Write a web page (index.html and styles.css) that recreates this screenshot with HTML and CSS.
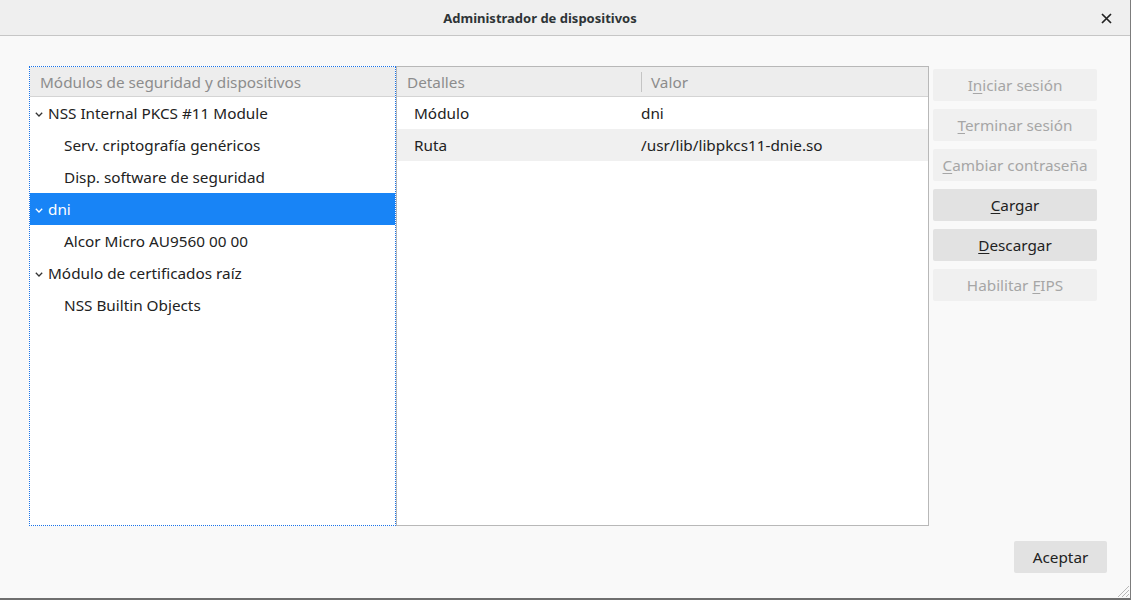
FILE: index.html
```html
<!DOCTYPE html>
<html lang="es">
<head>
<meta charset="utf-8">
<title>Administrador de dispositivos</title>
<link rel="stylesheet" href="styles.css">
</head>
<body>
<div class="window">
  <header class="titlebar">
    <div class="title">Administrador de dispositivos</div>
    <button class="close" aria-label="Cerrar">
      <svg width="11" height="11" viewBox="0 0 11 11"><path d="M1 1L10 10M10 1L1 10" stroke="#222" stroke-width="1.7" fill="none"/></svg>
    </button>
  </header>
  <main class="content">
    <div class="panes">
      <section class="tree">
        <div class="tree-head">Módulos de seguridad y dispositivos</div>
        <div class="row parent"><svg class="chev" width="8" height="5" viewBox="0 0 8 5"><path d="M0.8 0.8L4 4L7.2 0.8" stroke="currentColor" stroke-width="1.3" fill="none"/></svg>NSS Internal PKCS #11 Module</div>
        <div class="row child">Serv. criptografía genéricos</div>
        <div class="row child">Disp. software de seguridad</div>
        <div class="row parent selected"><svg class="chev" width="8" height="5" viewBox="0 0 8 5"><path d="M0.8 0.8L4 4L7.2 0.8" stroke="currentColor" stroke-width="1.3" fill="none"/></svg>dni</div>
        <div class="row child">Alcor Micro AU9560 00 00</div>
        <div class="row parent"><svg class="chev" width="8" height="5" viewBox="0 0 8 5"><path d="M0.8 0.8L4 4L7.2 0.8" stroke="currentColor" stroke-width="1.3" fill="none"/></svg>Módulo de certificados raíz</div>
        <div class="row child">NSS Builtin Objects</div>
      </section>
      <section class="details">
        <div class="det-head">
          <div class="c1">Detalles</div>
          <div class="c2">Valor</div>
        </div>
        <div class="det-row">
          <div class="c1">Módulo</div>
          <div class="c2">dni</div>
        </div>
        <div class="det-row alt">
          <div class="c1">Ruta</div>
          <div class="c2">/usr/lib/libpkcs11-dnie.so</div>
        </div>
      </section>
      <div class="actions">
        <button class="btn" disabled>I<u>n</u>iciar sesión</button>
        <button class="btn" disabled><u>T</u>erminar sesión</button>
        <button class="btn" disabled><u>C</u>ambiar contraseña</button>
        <button class="btn"><u>C</u>argar</button>
        <button class="btn"><u>D</u>escargar</button>
        <button class="btn" disabled>Habilitar <u>F</u>IPS</button>
      </div>
    </div>
    <footer class="footer">
      <button class="btn ok">Aceptar</button>
    </footer>
  </main>
  <svg class="grip" width="12" height="12" viewBox="0 0 12 12"><path d="M12 1L1 12M12 5L5 12M12 9L9 12" stroke="#b8b8b8" stroke-width="1" fill="none"/></svg>
</div>
</body>
</html>
```
FILE: styles.css
```css
html, body {
  margin: 0;
  padding: 0;
}
body {
  font-family: "Noto Sans", "Open Sans", sans-serif;
  font-size: 15.3px;
  color: #2a2a2a;
  background: #f9f9f9;
}
.window {
  position: relative;
  width: 1131px;
  height: 600px;
  box-sizing: border-box;
  border-right: 1px solid #7c7c7c;
  border-bottom: 2px solid #6f6f6f;
  background: #f9f9f9;
  display: flex;
  flex-direction: column;
}
.titlebar {
  height: 35px;
  border-bottom: 1px solid #c6c6c6;
  background: #efefef;
  display: flex;
  align-items: center;
  justify-content: center;
  position: relative;
  flex: none;
}
.title {
  font-weight: bold;
  font-size: 13px;
  color: #2e3436;
  margin-right: 50px;
}
.close {
  position: absolute;
  right: 18px;
  top: 12px;
  width: 12px;
  height: 12px;
  padding: 0;
  border: 0;
  background: none;
  display: flex;
  align-items: center;
  justify-content: center;
}
.content {
  flex: 1;
  display: flex;
  flex-direction: column;
  padding: 30px 0 0 29px;
}
.panes {
  display: flex;
  align-items: flex-start;
}
.tree {
  width: 367px;
  height: 460px;
  box-sizing: border-box;
  border: 1px dotted #1a73e8;
  background: #fff;
}
.tree-head {
  height: 30px;
  box-sizing: border-box;
  border-bottom: 1px solid #d4d4d4;
  background: #ededed;
  color: #8c8c8c;
  padding-left: 10px;
  display: flex;
  align-items: center;
}
.row {
  height: 32px;
  display: flex;
  align-items: center;
  color: #222;
}
.row.parent {
  padding-left: 5px;
}
.row.child {
  padding-left: 34px;
}
.chev {
  margin-right: 5px;
  margin-top: 2px;
  color: #333;
}
.row.selected {
  background: #1884f6;
  color: #fff;
}
.row.selected .chev {
  color: #fff;
}
.details {
  width: 533px;
  height: 460px;
  box-sizing: border-box;
  border: 1px solid #b8b8b8;
  background: #fff;
}
.det-head {
  height: 30px;
  box-sizing: border-box;
  border-bottom: 1px solid #d4d4d4;
  background: #ededed;
  color: #8c8c8c;
  display: flex;
  align-items: center;
}
.det-head .c1 {
  width: 244px;
  padding-left: 10px;
  box-sizing: border-box;
}
.det-head .c2 {
  border-left: 1px solid #c4c4c4;
  height: 20px;
  line-height: 20px;
  padding-left: 9px;
}
.det-row {
  height: 32px;
  display: flex;
  align-items: center;
  color: #222;
}
.det-row.alt {
  background: #f0f0f0;
}
.det-row .c1 {
  width: 244px;
  padding-left: 17px;
  box-sizing: border-box;
}
.actions {
  margin-left: 4px;
  margin-top: 3px;
  display: flex;
  flex-direction: column;
  gap: 8px;
}
.btn {
  font-family: inherit;
  font-size: 15.3px;
  width: 164px;
  height: 32px;
  border: 0;
  border-radius: 2px;
  background: #e2e2e2;
  color: #222;
  padding: 0;
  cursor: default;
}
.btn:disabled {
  background: #f0f0f0;
  color: #a6a6a6;
}
.btn u {
  text-decoration-thickness: 1px;
  text-underline-offset: 2px;
}
.footer {
  display: flex;
  justify-content: flex-end;
  padding: 15px 23px 0 0;
}
.btn.ok {
  width: 93px;
}
.grip {
  position: absolute;
  right: 1px;
  bottom: 1px;
}
```
